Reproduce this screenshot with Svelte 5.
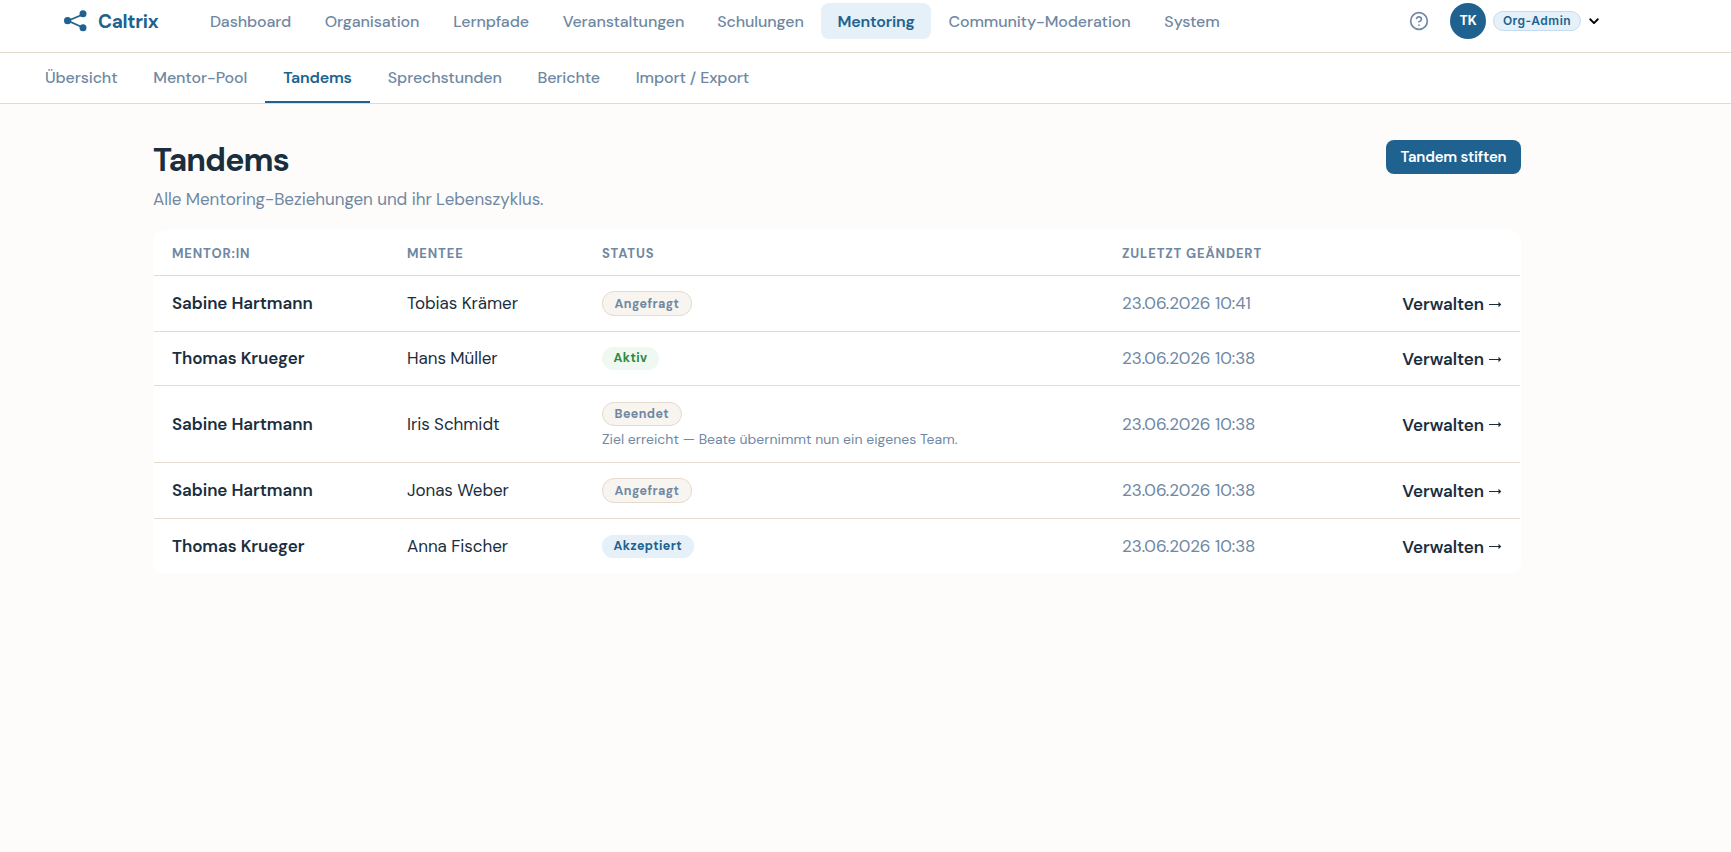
<script>
    const mainNav = [
        { label: 'Dashboard', width: 113 },
        { label: 'Organisation', width: 126 },
        { label: 'Lernpfade', width: 108 },
        { label: 'Veranstaltungen', width: 153 },
        { label: 'Schulungen', width: 117 },
        { label: 'Mentoring', width: 110 },
        { label: 'Community-Moderation', width: 213 },
        { label: 'System', width: 88 },
    ];

    const tabs = [
        { label: 'Übersicht', width: 108.5 },
        { label: 'Mentor-Pool', width: 129.5 },
        { label: 'Tandems', width: 105 },
        { label: 'Sprechstunden', width: 149.5 },
        { label: 'Berichte', width: 98.5 },
        { label: 'Import / Export', width: 149 },
    ];

    const tandems = [
        { mentor: 'Sabine Hartmann', mentee: 'Tobias Krämer', status: 'Angefragt', kind: 'neutral', changed: '23.06.2026 10:41' },
        { mentor: 'Thomas Krueger', mentee: 'Hans Müller', status: 'Aktiv', kind: 'success', changed: '23.06.2026 10:38' },
        { mentor: 'Sabine Hartmann', mentee: 'Iris Schmidt', status: 'Beendet', kind: 'neutral', changed: '23.06.2026 10:38', note: 'Ziel erreicht — Beate übernimmt nun ein eigenes Team.' },
        { mentor: 'Sabine Hartmann', mentee: 'Jonas Weber', status: 'Angefragt', kind: 'neutral', changed: '23.06.2026 10:38' },
        { mentor: 'Thomas Krueger', mentee: 'Anna Fischer', status: 'Akzeptiert', kind: 'info', changed: '23.06.2026 10:38' },
    ];

    let activeNav = $state('Mentoring');
    let activeTab = $state('Tandems');
</script>

<header class="topbar">
    <div class="brand">
        <svg width="24" height="22" viewBox="0 0 24 22">
            <path d="M20 4 4 10.7 20 18" fill="none" stroke="currentColor" stroke-width="1.8" />
            <circle cx="3.6" cy="10.7" r="3.6" fill="currentColor" />
            <circle cx="19" cy="3.7" r="3.5" fill="currentColor" />
            <circle cx="19" cy="17.7" r="3.5" fill="currentColor" />
        </svg>
        <span>Caltrix</span>
    </div>
    <nav class="main-nav">
        {#each mainNav as { label, width }}
            <button class:active={activeNav === label} style="width: {width}px" onclick={() => (activeNav = label)}>{label}</button>
        {/each}
    </nav>
    <div class="user">
        <svg class="help" width="20" height="20" viewBox="0 0 24 24" fill="none" stroke="currentColor" stroke-width="2" stroke-linecap="round" stroke-linejoin="round">
            <circle cx="12" cy="12" r="10" />
            <path d="M9.09 9a3 3 0 0 1 5.83 1c0 2-3 3-3 3" />
            <path d="M12 17h.01" />
        </svg>
        <span class="avatar">TK</span>
        <span class="role">Org-Admin</span>
        <svg class="chevron" width="14" height="14" viewBox="0 0 24 24" fill="none" stroke="#000" stroke-width="3.2" stroke-linecap="round" stroke-linejoin="round">
            <path d="m5.5 9 6.5 6.5L18.500 9" />
        </svg>
    </div>
</header>

<nav class="tabs">
    {#each tabs as { label, width }}
        <button class:active={activeTab === label} style="width: {width}px" onclick={() => (activeTab = label)}>{label}</button>
    {/each}
</nav>

<main>
    <div class="page-head">
        <div>
            <h1>Tandems</h1>
            <p>Alle Mentoring-Beziehungen und ihr Lebenszyklus.</p>
        </div>
        <button class="primary">Tandem stiften</button>
    </div>

    <div class="card">
        <div class="row head">
            <span>Mentor:in</span>
            <span>Mentee</span>
            <span>Status</span>
            <span>Zuletzt geändert</span>
            <span></span>
        </div>
        {#each tandems as { mentor, mentee, status, kind, changed, note }}
            <div class="row {kind}" class:with-note={note}>
                <span class="mentor">{mentor}</span>
                <span class="mentee">{mentee}</span>
                <div class="status">
                    <span class="badge">{status}</span>
                    {#if note}
                        <small>{note}</small>
                    {/if}
                </div>
                <span class="changed">{changed}</span>
                <span class="manage">
                    Verwalten
                    <svg width="13" height="9" viewBox="0 0 13 9" fill="currentColor">
                        <path d="M0 4h9.500V1.700L12.300 4.500 9.500 7.300V5H0z" />
                    </svg>
                </span>
            </div>
        {/each}
    </div>
</main>

<style>
    :global(body) {
        background: #fdfcfa;
        color: #1a2e3d;
        font-family: 'DM Sans', Inter, sans-serif;
        font-size: 17px;
        letter-spacing: -0.06px;
    }

    button {
        border: 0;
        padding: 0;
        background: none;
        font: inherit;
        white-space: nowrap;
        cursor: pointer;
    }

    .topbar {
        box-sizing: border-box;
        height: 53px;
        padding: 3px 130px 13px 64px;
        display: flex;
        align-items: center;
        background: #fff;
        border-bottom: 1px solid #e5dace;
    }

    .brand {
        width: 130px;
        display: flex;
        align-items: center;
        gap: 10px;
        color: #20628f;
        font-size: 19px;
        font-weight: 700;
        letter-spacing: -0.3px;
    }

    .brand span {
        padding-top: 1px;
    }

    .main-nav {
        display: flex;
        gap: 2px;
    }

    .main-nav button {
        height: 36px;
        border-radius: 8px;
        color: #6f88a3;
        font-size: 16px;
        font-weight: 500;
        letter-spacing: -0.12px;
    }

    .main-nav .active {
        background: #e5f0f8;
        color: #20628f;
        font-weight: 600;
        letter-spacing: -0.2px;
    }

    .user {
        margin-left: auto;
        display: flex;
        align-items: center;
    }

    .help {
        color: #6f88a3;
        margin-right: 21px;
    }

    .avatar {
        width: 36px;
        height: 36px;
        border-radius: 50%;
        background: #20628f;
        color: #fff;
        font-family: Inter, sans-serif;
        font-size: 12.5px;
        font-weight: 700;
        line-height: 36px;
        text-align: center;
    }

    .role {
        box-sizing: border-box;
        width: 88px;
        height: 20px;
        margin: 0 6px 0 7px;
        border: 1px solid #c3ddee;
        border-radius: 10px;
        background: #e5f0f8;
        color: #20628f;
        font-family: Inter, sans-serif;
        font-size: 12px;
        font-weight: 600;
        letter-spacing: 0.5px;
        line-height: 18px;
        text-align: center;
    }

    .tabs {
        height: 50px;
        padding-left: 27px;
        display: flex;
        background: #fff;
        border-bottom: 1px solid #e5dace;
    }

    .tabs button {
        box-sizing: border-box;
        border-bottom: 2px solid transparent;
        color: #6f88a3;
        font-size: 16px;
        font-weight: 500;
        letter-spacing: -0.12px;
    }

    .tabs .active {
        border-color: #20628f;
        color: #20628f;
        font-weight: 600;
        letter-spacing: -0.2px;
    }

    main {
        width: 1368px;
        padding: 36px 0 0 153px;
    }

    .page-head {
        height: 90px;
        display: flex;
        justify-content: space-between;
        align-items: flex-start;
    }

    h1 {
        margin: 0;
        font-size: 32px;
        font-weight: 700;
        line-height: 40px;
        letter-spacing: -0.9px;
    }

    p {
        margin: 6px 0 0;
        color: #6f88a3;
        line-height: 26px;
    }

    .primary {
        width: 135px;
        height: 34px;
        border-radius: 8px;
        background: #20628f;
        color: #fff;
        font-size: 15px;
        font-weight: 600;
        letter-spacing: -0.2px;
    }

    .card {
        box-sizing: border-box;
        height: 344px;
        padding: 0 1px;
        border-radius: 12px;
        background: #fff;
    }

    .row {
        box-sizing: border-box;
        height: 56px;
        padding: 0 18px;
        display: grid;
        grid-template-columns: 235px 195px 520px 1fr auto;
        align-items: center;
        border-bottom: 1px solid #e5dace;
    }

    .row.head {
        height: 46px;
        padding-top: 2px;
        color: #6f88a3;
        font-size: 13px;
        font-weight: 700;
        letter-spacing: 0.85px;
        text-transform: uppercase;
    }

    .row.success {
        height: 54px;
    }

    .row.with-note {
        height: 77px;
    }

    .row:last-child {
        height: 54px;
        border-bottom: 0;
    }

    .mentor {
        font-weight: 600;
    }

    .status {
        display: flex;
        flex-direction: column;
        align-items: flex-start;
    }

    .badge {
        box-sizing: border-box;
        height: 23px;
        padding: 0 11.5px;
        border-radius: 12px;
        font-size: 12.5px;
        font-weight: 700;
        letter-spacing: 0.4px;
        line-height: 23px;
    }

    .neutral .badge {
        height: 25px;
        border: 1px solid #e5dace;
        background: #f8f4ef;
        color: #6f88a3;
        line-height: 24px;
    }

    .success .badge {
        background: #eff9f1;
        color: #2b8a3e;
    }

    .info .badge {
        background: #e5f0f8;
        color: #20628f;
    }

    .with-note .status {
        padding-top: 2px;
    }

    .with-note .badge {
        height: 24px;
        line-height: 22px;
    }

    small {
        margin-top: 3px;
        color: #6f88a3;
        font-size: 14px;
        letter-spacing: 0.02px;
        line-height: 20px;
    }

    .mentor,
    .mentee,
    .changed {
        padding-bottom: 1px;
    }

    .changed {
        color: #6f88a3;
    }

    .manage {
        padding-top: 1px;
        display: flex;
        align-items: center;
        gap: 5px;
        font-weight: 600;
    }
</style>
